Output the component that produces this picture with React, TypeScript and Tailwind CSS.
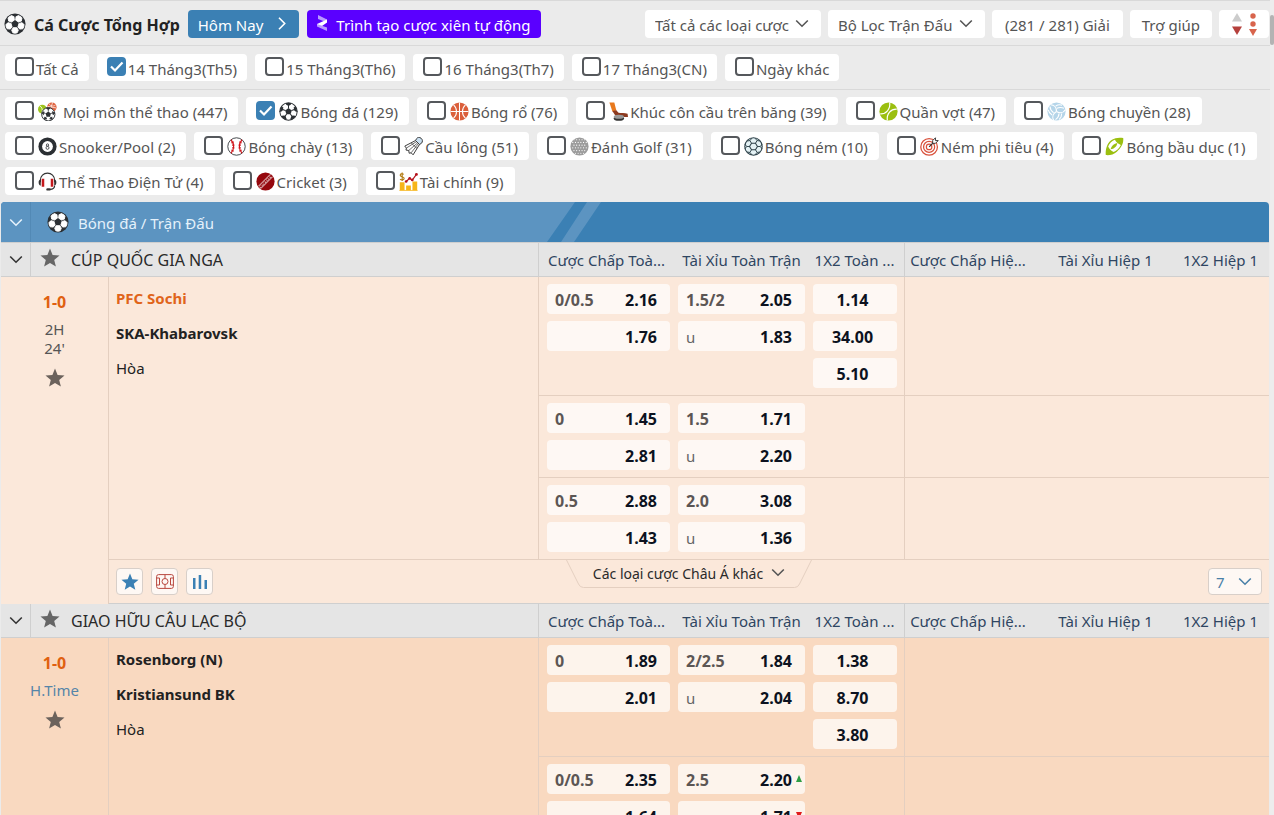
import { useState, type ReactNode } from "react"
import clsx from "clsx"

type Trend = "up" | "down"

interface Odd {
  label?: string
  value: string
  trend?: Trend
}

interface Line {
  handicap: Odd[]
  total: Odd[]
  result: Odd[]
}

interface Match {
  league: string
  score: string
  time: string[]
  halfTime?: boolean
  home: string
  away: string
  leader?: boolean
  tone: string
  more?: string
  lines: Line[]
}

const PATCHES = [0, 72, 144, 216, 288]

const SoccerBall = ({ size = 19 }: { size?: number }) => (
  <svg width={size} height={size} viewBox="0 0 24 24" className="shrink-0" aria-hidden="true">
    <circle cx="12" cy="12" r="11.6" fill="#2b2f33" />
    <circle cx="12" cy="12" r="10.4" fill="#fff" />
    <path d="M12 7.6l4.2 3-1.6 5H9.4l-1.6-5z" fill="#2b2f33" />
    {PATCHES.map((angle) => (
      <g key={angle} transform={`rotate(${angle} 12 12)`}>
        <path d="M12 8V4" stroke="#2b2f33" strokeWidth="1.3" />
        <path d="M8 1.4h8L14.8 3.6 12 5.2 9.2 3.6z" fill="#2b2f33" />
      </g>
    ))}
  </svg>
)

const DarkBall = ({ size = 22 }: { size?: number }) => (
  <svg width={size} height={size} viewBox="0 0 24 24" className="shrink-0" aria-hidden="true">
    <circle cx="12" cy="12" r="11.5" fill="#2b2f33" />
    {PATCHES.map((angle) => (
      <path
        key={angle}
        transform={`rotate(${angle + 36} 12 12)`}
        d="M9.6 2.4Q12 1.4 14.4 2.4L15.6 5.2 14 8H10L8.4 5.2z"
        fill="#fff"
        stroke="#fff"
        strokeWidth="1"
        strokeLinejoin="round"
      />
    ))}
  </svg>
)

const Icon = ({ children }: { children: ReactNode }) => (
  <svg width="19" height="19" viewBox="0 0 24 24" className="shrink-0" fill="none" aria-hidden="true">
    {children}
  </svg>
)

const AllSports = () => (
  <Icon>
    <circle cx="5.5" cy="9" r="5.5" fill="#9ec41c" />
    <path d="M2 5c3 1 4 4 3 9" stroke="#fff" />
    <circle cx="17.5" cy="6.5" r="6" fill="#e0633f" />
    <path d="M12 5.5l11 2M18.5.5l-2 6M14 2c1 3 5 4 8 2" stroke="#fff" strokeWidth=".9" />
    <circle cx="13" cy="15.5" r="8.4" fill="#fff" stroke="#2b2f33" strokeWidth="1.2" />
    <path d="M13 12l3.4 2.5-1.3 4h-4.2l-1.3-4z" fill="#2b2f33" />
    <path d="M10.5 7.6h5L13 9.6zM4.8 14l2.8-1.8L7 16zM21.2 14l-2.8-1.8.6 3.8zM8 21.8l.6-3 2.6 2.6zM18 21.8l-.6-3-2.6 2.6z" fill="#2b2f33" stroke="#2b2f33" />
    <path d="M13 9v3M9.6 14.5l-3-1M16.4 14.5l3-1M10.9 18.5l-1.6 2M15.1 18.5l1.6 2" stroke="#2b2f33" />
  </Icon>
)

const Basketball = () => (
  <Icon>
    <circle cx="12" cy="12" r="11.5" fill="#db5f3b" />
    <path d="M12 .5v23M.5 12h23M4.5 3.5c5 4.5 5 12.5 0 17M19.5 3.5c-5 4.5-5 12.5 0 17" stroke="#fff" strokeWidth="1.3" />
  </Icon>
)

const Hockey = () => (
  <Icon>
    <path d="M.5.5h6.2l2.6 10.2-5 1.2z" fill="#e8791d" />
    <path d="M4.2 11.5l5-1.2 2.8 3.4c3 .6 8 .3 11.5 1l.5 4.3h-10L8 17z" fill="#8c3a20" />
    <ellipse cx="12.5" cy="20.5" rx="6.5" ry="3.3" fill="#333" />
    <ellipse cx="12.5" cy="18.6" rx="6.5" ry="2.6" fill="#9a9a9a" />
  </Icon>
)

const Tennis = () => (
  <Icon>
    <circle cx="12" cy="12" r="11.5" fill="#9bbf10" />
    <path d="M1.5 15C9 15.5 14.5 9 13.5 .8M22.5 9C15 8.5 9.5 15 10.5 23.2" stroke="#fff" strokeWidth="1.5" />
  </Icon>
)

const Volleyball = () => (
  <Icon>
    <circle cx="12" cy="12" r="11.5" fill="#b5d5e9" />
    {[0, 120, 240].map((angle) => (
      <path
        key={angle}
        transform={`rotate(${angle} 12 12)`}
        d="M12 12C12 7 9 3.5 4.5 3.5M12.5 8c3-1.5 6-1.5 9 0M11 5c2.5-1.5 5.5-1.8 8-1"
        stroke="#fff"
        strokeWidth="1.4"
      />
    ))}
  </Icon>
)

const Pool = () => (
  <Icon>
    <circle cx="12" cy="12" r="11.5" fill="#2b2f33" />
    <circle cx="12" cy="12" r="6.8" fill="#fff" />
    <circle cx="12" cy="10.2" r="1.5" stroke="#2b2f33" strokeWidth="1" />
    <circle cx="12" cy="13.7" r="1.9" stroke="#2b2f33" strokeWidth="1" />
  </Icon>
)

const Baseball = () => (
  <Icon>
    <circle cx="12" cy="12" r="11" fill="#fff" stroke="#2b2f33" strokeWidth="1.1" />
    <path d="M5 3.5c4.5 5 4.5 12 0 17M19 3.5c-4.5 5-4.5 12 0 17" stroke="#d0161c" strokeWidth="1.5" />
    <path d="M5.5 7.5l3-1.5M6.5 10.5l3-.5M6.5 13.5l3 .5M5.5 16.5l3 1.5M18.5 7.5l-3-1.5M17.5 10.5l-3-.5M17.5 13.5l-3 .5M18.5 16.5l-3 1.5" stroke="#d0161c" strokeWidth="1.3" />
  </Icon>
)

const Badminton = () => (
  <Icon>
    <path d="M14.5 4.5l5 5 2.5-1.5c2-2 1.5-5-.5-6.5s-4-1.5-5.5.5z" fill="#c9dff0" stroke="#333" strokeWidth="1.2" />
    <path d="M14.5 4.5L1 11.5l2 2.5-.5 2.5 3.5.5.5 3.5 2.5-.5 2.5 2.5 8-13z" fill="#fff" stroke="#333" strokeWidth="1.2" strokeLinejoin="round" />
    <path d="M3 14L15.5 6M6 17L17 7.5M9 20l9-11.5M9 7.5l7.5 7" stroke="#333" strokeWidth=".9" />
  </Icon>
)

const Golf = () => (
  <Icon>
    <circle cx="12" cy="12" r="11.5" fill="#9c9c9c" />
    {[3.5, 6.9, 10.3, 13.7, 17.1, 20.5].map((y, i) => (
      <path
        key={y}
        d={i % 2 ? `M3.5 ${y}H21` : `M5 ${y}H20`}
        stroke="#fff"
        strokeWidth="1.5"
        strokeLinecap="round"
        strokeDasharray="0 3.4"
      />
    ))}
  </Icon>
)

const Handball = () => (
  <Icon>
    <circle cx="12" cy="12" r="11" fill="#e4f2f5" stroke="#2d4149" strokeWidth="1.4" />
    <path d="M9.5 8h5l2.5 4-2.5 4h-5L7 12z" stroke="#2d4149" strokeWidth="1.3" />
    <path d="M9.5 8L7.5 4.5 4 5M7.5 4.5L10 1.5M14.5 8l2-3.5L20 5M16.5 4.5L14 1.5M17 12h3.5l2.5-3M20.5 12l2.5 3M7 12H3.5L1 9M3.5 12L1 15M9.5 16l-2 3.5L4 19M7.5 19.5L10 22.5M14.5 16l2 3.5 3.5-.5M16.5 19.5L14 22.5" stroke="#2d4149" strokeWidth="1.2" />
  </Icon>
)

const Darts = () => (
  <Icon>
    <circle cx="11.5" cy="12.5" r="10.5" stroke="#d9513c" strokeWidth="1.6" />
    <circle cx="11.5" cy="12.5" r="7" stroke="#d9513c" strokeWidth="1.6" />
    <circle cx="11.5" cy="12.5" r="3.5" stroke="#d9513c" strokeWidth="1.5" />
    <path d="M11.5 12.5L18 6" stroke="#333" strokeWidth="1.5" />
    <path d="M16 8V4.5L19.5 1v3.5H23L19.5 8z" fill="#fff" stroke="#333" strokeWidth="1.2" strokeLinejoin="round" />
  </Icon>
)

const Rugby = () => (
  <Icon>
    <path d="M23 1.2C13-.5 6 3.5 3 10c-1.800 4-2.500 8.500-2 12.800 4.500.7 10-.8 14-4.300C20.500 14 23.800 8 23 1.200z" fill="#9bbf10" />
    <path d="M12.5 3.500C9 5 5.500 8 4 12c1.500 3 3.500 5.500 7 7 4-2 7-5 9-9-3-1-6-3.500-7.500-6.500z" fill="#fff" />
    <path d="M15.5 7.500c-4 .5-7.500 3.500-8.500 8 4.500-.5 8-3.500 8.500-8z" fill="#9bbf10" />
  </Icon>
)

const Esports = () => (
  <Icon>
    <path d="M3 13V10.5C3 5 7 1.5 12 1.5s9 3.500 9 9V13" stroke="#333" strokeWidth="1.5" />
    <path d="M3.5 9C1.5 9.500.8 11 .8 13s.7 4 2.700 4.500zM20.5 9c2 .5 2.700 2 2.700 4s-.7 4-2.700 4.500z" fill="#333" />
    <path d="M4.700 8.500h3.200v10H4.700zM16.100 8.500h3.200v10h-3.200z" fill="#c4191d" />
    <path d="M21 17.500c0 3-2.500 4.500-6 4.500" stroke="#333" strokeWidth="1.5" />
    <rect x="10.5" y="20.5" width="5.5" height="3" rx="1.5" fill="#333" />
  </Icon>
)

const Cricket = () => (
  <Icon>
    <circle cx="12" cy="12" r="11.5" fill="#95070d" />
    <path d="M3 18L18 3M6 21L21 6" stroke="#fff" strokeWidth="1.1" />
    <path d="M4.200 19.200L19.200 4.200M5.200 20.200L20.200 5.200" stroke="#fff" strokeWidth="1" strokeDasharray="1.5 1.5" />
  </Icon>
)

const Finance = () => (
  <Icon>
    <path d="M1 13h6v10H1zM9 17h6v6H9zM17 12h6v11h-6z" fill="#f6b519" />
    <path d="M6 3C4.500 1.800 1.500 2 1.500 4c0 2.300 5 1.500 5 4 0 2.200-3.500 2.500-5.200 1M4 .5v11" stroke="#b27a10" strokeWidth="1.4" />
    <path d="M9 12l4.500-4 3 2.500L22 3" stroke="#b5121b" strokeWidth="1.5" />
    <circle cx="9" cy="12" r="1.7" fill="#b5121b" />
    <circle cx="13.5" cy="8" r="1.7" fill="#b5121b" />
    <circle cx="16.8" cy="10" r="1.7" fill="#b5121b" />
    <circle cx="22" cy="3" r="1.8" fill="#b5121b" />
    <path d="M.5 23.300h23" stroke="#f6b519" />
  </Icon>
)

const Chevron = ({ className }: { className?: string }) => (
  <svg width="14" height="9" viewBox="0 0 14 9" fill="none" className={clsx("shrink-0", className)} aria-hidden="true">
    <path d="M1.2 1.5L7 7.2l5.8-5.7" stroke="currentColor" strokeWidth="1.6" />
  </svg>
)

const Star = ({ className, size = 20 }: { className?: string; size?: number }) => (
  <svg width={size} height={size} viewBox="0 0 20 20" className={clsx("shrink-0", className)} fill="currentColor" aria-hidden="true">
    <path d="M10 .5l2.600 6.400 6.900.5-5.300 4.500 1.700 6.700L10 14.900l-5.900 3.700 1.700-6.700L.5 7.400l6.900-.5z" />
  </svg>
)

const dates = ["Tất Cả", "14 Tháng3(Th5)", "15 Tháng3(Th6)", "16 Tháng3(Th7)", "17 Tháng3(CN)", "Ngày khác"]

const sports = [
  { name: "\u00a0Mọi môn thể thao", count: 447, icon: <AllSports /> },
  { name: "Bóng đá", count: 129, icon: <SoccerBall /> },
  { name: "Bóng rổ", count: 76, icon: <Basketball /> },
  { name: "Khúc côn cầu trên băng", count: 39, icon: <Hockey /> },
  { name: "Quần vợt", count: 47, icon: <Tennis /> },
  { name: "Bóng chuyền", count: 28, icon: <Volleyball /> },
  { name: "Snooker/Pool", count: 2, icon: <Pool /> },
  { name: "Bóng chày", count: 13, icon: <Baseball /> },
  { name: "Cầu lông", count: 51, icon: <Badminton /> },
  { name: "Đánh Golf", count: 31, icon: <Golf /> },
  { name: "Bóng ném", count: 10, icon: <Handball /> },
  { name: "Ném phi tiêu", count: 4, icon: <Darts /> },
  { name: "Bóng bầu dục", count: 1, icon: <Rugby /> },
  { name: "Thể Thao Điện Tử", count: 4, icon: <Esports /> },
  { name: "Cricket", count: 3, icon: <Cricket /> },
  { name: "Tài chính", count: 9, icon: <Finance /> },
]

const matches: Match[] = [
  {
    league: "CÚP QUỐC GIA NGA",
    score: "1-0",
    time: ["2H", "24'"],
    home: "PFC Sochi",
    away: "SKA-Khabarovsk",
    leader: true,
    tone: "bg-[#fbe8da]",
    more: "7",
    lines: [
      {
        handicap: [{ label: "0/0.5", value: "2.16" }, { value: "1.76" }],
        total: [{ label: "1.5/2", value: "2.05" }, { label: "u", value: "1.83" }],
        result: [{ value: "1.14" }, { value: "34.00" }, { value: "5.10" }],
      },
      {
        handicap: [{ label: "0", value: "1.45" }, { value: "2.81" }],
        total: [{ label: "1.5", value: "1.71" }, { label: "u", value: "2.20" }],
        result: [],
      },
      {
        handicap: [{ label: "0.5", value: "2.88" }, { value: "1.43" }],
        total: [{ label: "2.0", value: "3.08" }, { label: "u", value: "1.36" }],
        result: [],
      },
    ],
  },
  {
    league: "GIAO HỮU CÂU LẠC BỘ",
    score: "1-0",
    time: ["H.Time"],
    halfTime: true,
    home: "Rosenborg (N)",
    away: "Kristiansund BK",
    tone: "bg-[#f9d9c0]",
    lines: [
      {
        handicap: [{ label: "0", value: "1.89" }, { value: "2.01" }],
        total: [{ label: "2/2.5", value: "1.84" }, { label: "u", value: "2.04" }],
        result: [{ value: "1.38" }, { value: "8.70" }, { value: "3.80" }],
      },
      {
        handicap: [{ label: "0/0.5", value: "2.35" }, { value: "1.64" }],
        total: [{ label: "2.5", value: "2.20", trend: "up" }, { label: "u", value: "1.71", trend: "down" }],
        result: [],
      },
    ],
  },
]

interface ChipProps {
  label: string
  icon?: ReactNode
  checked: boolean
  onChange: () => void
}

const Chip = ({ label, icon, checked, onChange }: ChipProps) => (
  <label className={clsx("flex items-center rounded bg-white pl-[10px] whitespace-nowrap", icon ? "h-7 pr-[11px]" : "h-[27px] pr-[10px]")}>
    <span className="relative mb-0.5 h-[19px] w-[19px] shrink-0">
      <input
        type="checkbox"
        checked={checked}
        onChange={onChange}
        className="peer block h-[19px] w-[19px] appearance-none rounded border-2 border-[#55585c] bg-white checked:border-[#3b80b4] checked:bg-[#3b80b4]"
      />
      <svg viewBox="0 0 19 19" fill="none" className="pointer-events-none absolute inset-0 hidden peer-checked:block">
        <path d="M4 9.5l4 4 7.5-8" stroke="#fff" strokeWidth="2.2" />
      </svg>
    </span>
    {icon ? <span className="ml-1 flex">{icon}</span> : null}
    <span className="ml-0.5 pt-0.5">{label}</span>
  </label>
)

const FilterSelect = ({ label }: { label: string }) => (
  <div className="relative">
    <select aria-label={label} className="h-7 appearance-none rounded bg-white pt-0.5 pr-8 pl-[10px] outline-none">
      <option>{label}</option>
    </select>
    <Chevron className="pointer-events-none absolute top-[9px] right-3" />
  </div>
)

const OddButton = ({ odd, centered }: { odd: Odd; centered?: boolean }) => (
  <button
    type="button"
    className={clsx(
      "relative flex h-[30px] w-full items-center rounded-sm bg-white/70 pt-0.5 text-base font-bold text-[#0c1220]",
      centered ? "justify-center pr-[5px]" : "justify-between pr-[13px] pl-2"
    )}
  >
    {centered ? null : (
      <span className={odd.label === "u" ? "text-[15px] font-normal text-[#666]" : "font-bold text-[#5c5654]"}>{odd.label}</span>
    )}
    {odd.value}
    {odd.trend ? (
      <svg width="6" height="7" viewBox="0 0 7 8" className="absolute top-[11px] right-[3px]" aria-hidden="true">
        {odd.trend === "up" ? <path d="M3.5 0L7 8H0z" fill="#2e9e44" /> : <path d="M3.5 8L7 0H0z" fill="#e01b1b" />}
      </svg>
    ) : null}
  </button>
)

const OddStack = ({ odds, centered }: { odds: Odd[]; centered?: boolean }) => (
  <div className="flex flex-col gap-[7px]">
    {odds.map((odd, i) => (
      <OddButton key={i} odd={odd} centered={centered} />
    ))}
  </div>
)

const LeagueRow = ({ league }: { league: string }) => {
  const cell = "h-[34px] whitespace-nowrap border-b border-[#cfcfcf] bg-[#e5e5e5]"
  const market = "text-center font-normal text-[#2f4562]"
  return (
    <tr>
      <th className={clsx(cell, "border-r")}>
        <button type="button" aria-label="Thu gọn" className="flex w-full justify-center text-[#333]">
          <Chevron />
        </button>
      </th>
      <th colSpan={2} className={clsx(cell, "pl-[9px] text-left font-normal text-[#2a2a2a]")}>
        <div className="flex items-center gap-[11px] text-base leading-5">
          <Star className="mb-1 text-[#666]" />
          {league}
        </div>
      </th>
      <th className={clsx(cell, market, "border-l")}>Cược Chấp Toà...</th>
      <th className={clsx(cell, market)}>Tài Xỉu Toàn Trận</th>
      <th className={clsx(cell, market, "pr-1")}>1X2 Toàn ...</th>
      <th className={clsx(cell, market, "border-l pr-1")}>Cược Chấp Hiệ...</th>
      <th className={clsx(cell, market)}>Tài Xỉu Hiệp 1</th>
      <th className={clsx(cell, market, "pr-1")}>1X2 Hiệp 1</th>
    </tr>
  )
}

const toolButton = "flex h-[27px] w-[27px] items-center justify-center rounded-sm border border-[#d8cfc9] bg-white/70"

const MatchRows = ({ match }: { match: Match }) => {
  const span = match.lines.length
  const line = "border-[#e4cfc0]"
  return (
    <tbody className={match.tone}>
      <LeagueRow league={match.league} />
      {match.lines.map((item, i) => (
        <tr key={i} className="align-top">
          {i === 0 ? (
            <>
              <td colSpan={2} rowSpan={match.more ? span + 1 : span} className={clsx("border-r pt-[15px] text-center text-[#555]", line)}>
                <p className="text-base leading-5 font-bold text-[#e06010]">{match.score}</p>
                <div className={clsx("mt-2 mb-[10px] leading-[19px]", match.halfTime && "text-[#5585a8]")}>
                  {match.time.map((t) => (
                    <p key={t}>{t}</p>
                  ))}
                </div>
                <button type="button" aria-label="Yêu thích" className="text-[#6b625c]">
                  <Star />
                </button>
              </td>
              <td rowSpan={span} className={clsx("pt-1 pl-[7px] leading-[35px] text-[#222]", match.more && "border-b", line)}>
                <p className={clsx("font-bold", match.leader && "text-[#e0641a]")}>{match.home}</p>
                <p className="font-bold">{match.away}</p>
                <p>Hòa</p>
              </td>
            </>
          ) : null}
          <td className={clsx("border-b border-l py-[7px] pr-1 pl-2", line)}>
            <OddStack odds={item.handicap} />
          </td>
          <td className={clsx("border-b px-1 py-[7px]", line)}>
            <OddStack odds={item.total} />
          </td>
          <td className={clsx("border-b py-[7px] pr-[7px] pl-1", line)}>
            <OddStack odds={item.result} centered />
          </td>
          <td colSpan={3} className={clsx("border-b border-l", line)} />
        </tr>
      ))}
      {match.more ? (
        <tr className="align-top">
          <td colSpan={7} className="h-11 border-b border-[#cfcfcf]">
            <div className="grid grid-cols-[1fr_auto_1fr] items-start px-[7px]">
              <div className="flex gap-2 pt-2">
                <button type="button" aria-label="Yêu thích" className={toolButton}>
                  <Star size={18} className="text-[#3b80b4]" />
                </button>
                <button type="button" aria-label="Sân đấu" className={toolButton}>
                  <svg width="18" height="15" viewBox="0 0 18 15" fill="none" stroke="#b9483f" strokeWidth="1">
                    <rect x=".6" y=".6" width="16.8" height="13.8" rx="2" />
                    <path d="M9 .6v4M9 10.4v4M.6 4h2.900v7H.6M17.400 4h-2.900v7h2.900" />
                    <circle cx="9" cy="7.5" r="3" />
                  </svg>
                </button>
                <button type="button" aria-label="Thống kê" className={toolButton}>
                  <svg width="14" height="14" viewBox="0 0 14 14" fill="#3b80b4">
                    <path d="M0 3h2.500v11H0zM5.700 0h2.500v14H5.700zM11.500 5H14v9h-2.500z" />
                  </svg>
                </button>
              </div>
              <button type="button" className="relative flex h-7 w-[246px] items-center justify-center gap-2 text-[14px] text-[#2a2a2a]">
                <svg viewBox="0 0 246 28" fill="none" stroke="#e4cfc0" className="absolute inset-0">
                  <path d="M.5 0l12 24q1.500 3.500 5 3.500h211q3.500 0 5-3.500l12-24" />
                </svg>
                Các loại cược Châu Á khác
                <Chevron className="mb-1 text-[#555]" />
              </button>
              <div className="relative mt-2 justify-self-end text-[#4a80a8]">
                <select aria-label="Số kèo" className="h-[27px] w-[54px] appearance-none rounded-sm border border-[#d8cfc9] bg-white/70 pl-[7px] outline-none">
                  <option>{match.more}</option>
                </select>
                <Chevron className="pointer-events-none absolute top-[9px] right-[10px]" />
              </div>
            </div>
          </td>
        </tr>
      ) : null}
    </tbody>
  )
}

export default function App() {
  const [date, setDate] = useState(dates[1])
  const [sport, setSport] = useState("Bóng đá")

  return (
    <div className="flex h-screen overflow-hidden bg-[#ebebeb] font-['Noto_Sans','Open_Sans',sans-serif] text-[15px] leading-5 text-[#555]">
      <div className="min-w-0 flex-1 overflow-y-auto [scrollbar-width:none]">
        <header className="flex h-[46px] items-center gap-2 border-t border-b border-[#d9d9d9] pt-0.5 pr-px pl-1">
          <DarkBall />
          <h1 className="pt-0.5 text-base leading-5 font-bold whitespace-nowrap text-[#222]">Cá Cược Tổng Hợp</h1>
          <button type="button" className="flex h-7 items-center gap-3 rounded bg-[#3b80b4] px-[10px] pt-0.5 whitespace-nowrap text-white">
            Hôm Nay
            <Chevron className="mb-1 -rotate-90" />
          </button>
          <button type="button" className="flex h-7 items-center gap-2 rounded bg-[#5a00ff] px-[10px] pt-0.5 whitespace-nowrap text-white">
            <svg width="11" height="16" viewBox="0 0 11 16" className="mb-1" aria-hidden="true">
              <path d="M1 0l9 4.500v3L1 4z" fill="#b99aff" />
              <path d="M10 4.500v3l-5 3.500L0 11V9z" fill="#fff" />
              <path d="M0 9l10 3.500V16L0 11.500z" fill="#b99aff" />
            </svg>
            Trình tạo cược xiên tự động
          </button>
          <div className="ml-auto flex gap-[7px]">
            <FilterSelect label="Tất cả các loại cược" />
            <FilterSelect label="Bộ Lọc Trận Đấu" />
            <button type="button" className="h-7 rounded bg-white px-[13px] pt-0.5 whitespace-nowrap">(281 / 281) Giải</button>
            <button type="button" className="h-7 rounded bg-white px-3 pt-0.5 whitespace-nowrap">Trợ giúp</button>
            <button type="button" aria-label="Sắp xếp" className="flex h-7 w-[50px] items-center justify-center gap-[7px] rounded bg-white">
              <svg width="10" height="22" viewBox="0 0 10 22">
                <path d="M5 0l5 8.5H0z" fill="#ccc" />
                <path d="M0 13.5h10L5 22z" fill="#b5403c" />
              </svg>
              <svg width="8" height="23" viewBox="0 0 8 23" fill="#d8644c">
                <circle cx="4" cy="3" r="2.7" />
                <circle cx="4" cy="11" r="2.7" />
                <path d="M0 16h8l-4 7z" />
              </svg>
            </button>
          </div>
        </header>

        <div className="flex flex-wrap gap-2 border-b border-[#d9d9d9] py-2 pl-[5px]">
          {dates.map((item) => (
            <Chip key={item} label={item} checked={item === date} onChange={() => setDate(item)} />
          ))}
        </div>

        <div className="flex flex-wrap gap-x-2 gap-y-[7px] py-[7px] pl-[5px]">
          {sports.map((item) => (
            <Chip
              key={item.name}
              label={`${item.name} (${item.count})`}
              icon={item.icon}
              checked={item.name === sport}
              onChange={() => setSport(item.name)}
            />
          ))}
        </div>

        <main className="mr-px ml-px">
          <div className="relative flex h-[41px] items-center overflow-hidden rounded-t border-b border-[#cfcfcf] bg-[#3b80b4] text-[#e4f1fb]">
            <svg width="602" height="40" className="absolute inset-y-0 left-0" fill="#5c94c1" aria-hidden="true">
              <path d="M0 0h574l-28 40H0zM586 0h14l-27 40h-13z" />
            </svg>
            <button type="button" aria-label="Thu gọn" className="relative flex h-full w-[30px] items-center justify-center border-r border-[#5289b5]">
              <Chevron />
            </button>
            <div className="relative flex items-center gap-[9px] pl-4">
              <DarkBall />
              <h2 className="pt-0.5">Bóng đá / Trận Đấu</h2>
            </div>
          </div>
          <table className="w-full table-fixed border-separate border-spacing-0">
            <colgroup>
              <col className="w-[30px]" />
              <col className="w-[78px]" />
              <col />
              <col className="w-[136px]" />
              <col className="w-[135px]" />
              <col className="w-[95px]" />
              <col className="w-[131px]" />
              <col className="w-[141px]" />
              <col className="w-[93px]" />
            </colgroup>
            {matches.map((match) => (
              <MatchRows key={match.league} match={match} />
            ))}
          </table>
        </main>
      </div>
      <div className="w-1 shrink-0 bg-[#ededed]">
        <div className="mt-[15px] h-[30px] rounded-sm bg-[#b3b3b3]" />
      </div>
    </div>
  )
}
